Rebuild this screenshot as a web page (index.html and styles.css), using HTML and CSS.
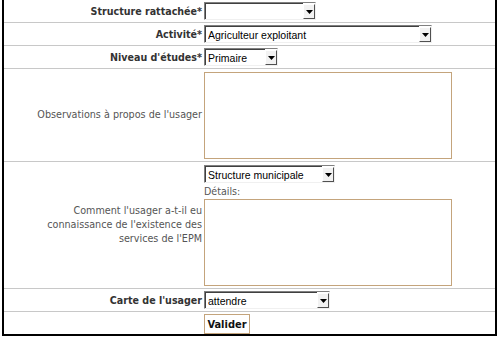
FILE: index.html
```html
<!DOCTYPE html>
<html lang="fr">
<head>
    <meta charset="UTF-8">
    <title>Fiche usager</title>
    <link rel="stylesheet" href="styles.css">
</head>
<body>
    <form action="">
        <table class="fiche">
            <tr>
                <th>Structure rattachée*</th>
                <td>
                    <span class="combo w-structure">
                        <select><option></option></select>
                        <span class="arrow"><svg width="7" height="4" viewBox="0 0 7 4"><path d="M0 0h7L3.5 4z" fill="#000"/></svg></span>
                    </span>
                </td>
            </tr>
            <tr>
                <th>Activité*</th>
                <td>
                    <span class="combo w-activite">
                        <select><option>Agriculteur exploitant</option></select>
                        <span class="arrow"><svg width="7" height="4" viewBox="0 0 7 4"><path d="M0 0h7L3.5 4z" fill="#000"/></svg></span>
                    </span>
                </td>
            </tr>
            <tr>
                <th>Niveau d'études*</th>
                <td>
                    <span class="combo w-niveau">
                        <select><option>Primaire</option></select>
                        <span class="arrow"><svg width="7" height="4" viewBox="0 0 7 4"><path d="M0 0h7L3.5 4z" fill="#000"/></svg></span>
                    </span>
                </td>
            </tr>
            <tr class="big">
                <th class="normal">Observations à propos de l'usager</th>
                <td><textarea></textarea></td>
            </tr>
            <tr class="big">
                <th class="normal">Comment l'usager a-t-il eu<br>connaissance de l'existence des<br>services de l'EPM</th>
                <td>
                    <span class="combo w-connu">
                        <select><option>Structure municipale</option></select>
                        <span class="arrow"><svg width="7" height="4" viewBox="0 0 7 4"><path d="M0 0h7L3.5 4z" fill="#000"/></svg></span>
                    </span>
                    <p class="details">Détails:</p>
                    <textarea></textarea>
                </td>
            </tr>
            <tr>
                <th>Carte de l'usager</th>
                <td>
                    <span class="combo w-carte">
                        <select><option>attendre</option></select>
                        <span class="arrow"><svg width="7" height="4" viewBox="0 0 7 4"><path d="M0 0h7L3.5 4z" fill="#000"/></svg></span>
                    </span>
                </td>
            </tr>
            <tr class="last">
                <th></th>
                <td><button type="submit">Valider</button></td>
            </tr>
        </table>
    </form>
</body>
</html>
```

FILE: styles.css
```css
body {
    margin: 0;
    background-color: #fff;
    font-family: "DejaVu Sans Condensed", "DejaVu Sans", sans-serif;
    font-size: 10.6px;
    color: #444;
}

form {
    margin: 0;
}

.fiche {
    margin-left: 2px;
    width: 495px;
    border: 2px solid #000;
    border-top: none;
    border-collapse: separate;
    border-spacing: 0;
}

.fiche th,
.fiche td {
    border-bottom: 1px solid #c8c8c8;
    padding: 2px 0;
    vertical-align: middle;
}

.fiche th {
    width: 198px;
    padding-right: 2px;
    text-align: right;
    font-weight: bold;
    color: #333;
    line-height: 14px;
}

.fiche th.normal {
    font-weight: normal;
    font-size: 10.7px;
    color: #555;
}

.fiche td {
    padding-left: 0;
}

.fiche tr.big td {
    padding-top: 3px;
}

.fiche tr.last th,
.fiche tr.last td {
    border-bottom: none;
    padding-bottom: 0;
}

/* liste déroulante façon windows classique */
.combo {
    display: flex;
    align-items: stretch;
    height: 18px;
    box-sizing: border-box;
    border: 1px solid;
    border-color: #808080 #f0f0f0 #f0f0f0 #808080;
    background-color: #fff;
}

.combo select {
    flex: 1;
    min-width: 0;
    appearance: none;
    -webkit-appearance: none;
    border: none;
    border-left: 1px solid #404040;
    border-top: 1px solid #404040;
    background: #fff;
    padding: 0 0 0 2px;
    margin: 0;
    font-family: "Liberation Sans", Arial, sans-serif;
    font-size: 10.5px;
    color: #000;
    outline: none;
}

.combo .arrow {
    display: flex;
    align-items: center;
    justify-content: center;
    width: 12px;
    margin: 1px 0 0 0;
    border-top: 1px solid #fff;
    border-left: 1px solid #fff;
    border-right: 1px solid #505050;
    border-bottom: 1px solid #505050;
    background-color: #f2f2f2;
    box-sizing: border-box;
}

.combo .arrow svg {
    display: block;
    margin-top: 1px;
}

.w-structure { width: 112px; }
.w-activite { width: 228px; }
.w-niveau { width: 74px; }
.w-connu { width: 131px; }
.w-carte { width: 126px; }

.fiche textarea {
    display: block;
    width: 248px;
    height: 87px;
    box-sizing: border-box;
    border: 1px solid #c4a47c;
    resize: none;
    margin: 0;
    padding: 1px;
}

.details {
    margin: 1px 0 1px 0;
    line-height: 14px;
    color: #555;
}

.fiche button {
    display: block;
    width: 46px;
    height: 20px;
    box-sizing: border-box;
    border: 1px solid #c4a47c;
    background-color: #fff;
    font-family: "DejaVu Sans Condensed", "DejaVu Sans", sans-serif;
    font-size: 11px;
    font-weight: bold;
    color: #111;
    padding: 0;
}
```
